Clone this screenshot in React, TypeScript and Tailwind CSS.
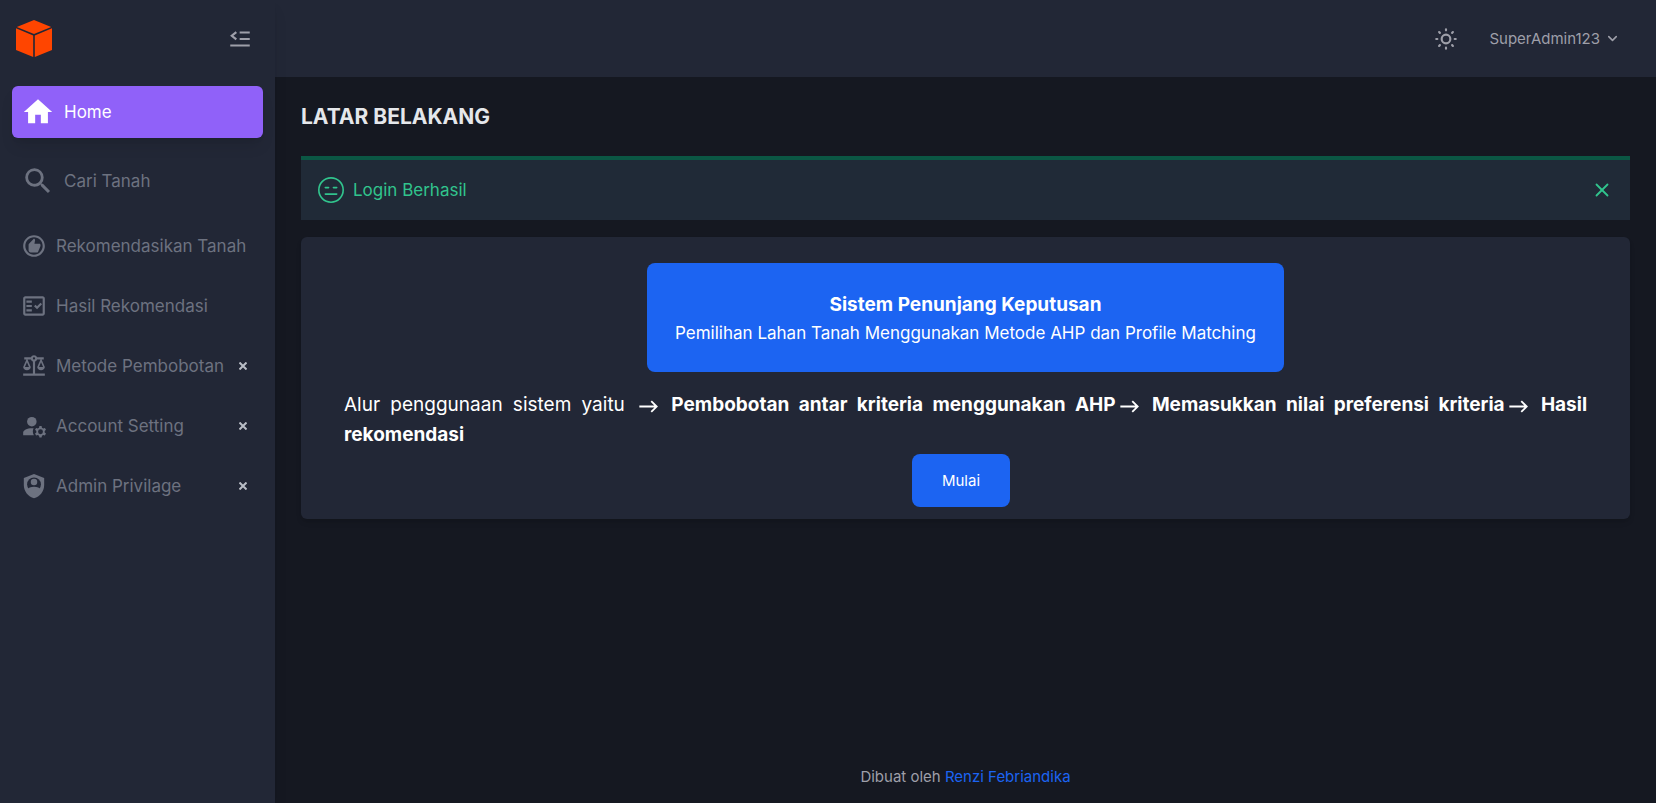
import type { ReactNode } from 'react'
import { MdHome, MdSearch, MdOutlineRecommend, MdOutlineFactCheck, MdOutlineBalance } from 'react-icons/md'
import { HiOutlineSun } from 'react-icons/hi'
import { BsEmojiExpressionless } from 'react-icons/bs'
import { FiChevronDown, FiX } from 'react-icons/fi'

function Logo() {
  return (
    <svg viewBox="0 0 36 37" className="h-[37px] w-9" fill="#ff4500" aria-hidden="true">
      <path d="M18 0 35.2 6.9 18 14 0.8 6.9Z" />
      <path d="M0 8.3 17.2 15.4V37L0 30Z" />
      <path d="M36 8.3 18.8 15.4V37L36 30Z" />
    </svg>
  )
}

function MenuFold() {
  return (
    <svg viewBox="0 0 24 24" className="size-[26px]" fill="none" stroke="currentColor" strokeWidth="2" aria-hidden="true">
      <path d="M11.7 6H21M11.7 12H21M3 18H21M8.6 5.6 4.4 9 8.6 12.4" />
    </svg>
  )
}

function AccountCog() {
  return (
    <svg viewBox="0 0 24 24" className="size-[26px] shrink-0" fill="currentColor" aria-hidden="true">
      <circle cx="10" cy="8" r="4.4" />
      <path d="M10 14c-4.42 0-8 1.79-8 4v2.6h9.9A7 7 0 0 1 11.64 14.09C11.11 14.03 10.56 14 10 14Z" />
      <path
        fillRule="evenodd"
        d="M17 12h2l.35 1.6 1.15.66 1.55-.5 1 1.74-1.2 1.1v1.3l1.2 1.1-1 1.74-1.55-.5-1.15.66L19 22.5h-2l-.35-1.6-1.15-.66-1.55.5-1-1.74 1.2-1.1v-1.3l-1.2-1.1 1-1.74 1.55.5 1.15-.66ZM18 15a2.25 2.25 0 1 0 0 4.5a2.25 2.25 0 0 0 0-4.5Z"
      />
    </svg>
  )
}

function ShieldAccount() {
  return (
    <svg viewBox="0 0 24 24" className="size-[26px] shrink-0" aria-hidden="true">
      <path fill="currentColor" d="M12 1 2.6 4.5V11c0 5.8 4 10.8 9.4 12.2 5.4-1.4 9.4-6.4 9.4-12.2V4.5Z" />
      <circle cx="12" cy="10.6" r="6.4" fill="#222736" />
      <circle cx="12" cy="8.4" r="3" fill="currentColor" />
      <path fill="currentColor" d="M12 12.6c-3 0-5.6 1.2-6.2 2.8C7 17.800 9.300 19.200 12 19.200s5-1.400 6.200-3.800c-.6-1.600-3.200-2.800-6.200-2.800Z" />
    </svg>
  )
}

function Arrow() {
  return (
    <svg viewBox="0 0 24 24" className="inline size-[26px]" fill="none" stroke="currentColor" strokeWidth="1.7" aria-hidden="true">
      <path d="M4 12.5h15.5M15 7.5l5 5-5 5" />
    </svg>
  )
}

function NavItem({ icon, label, large, active, expandable }: { icon: ReactNode; label: string; large?: boolean; active?: boolean; expandable?: boolean }) {
  return (
    <li>
      <a
        href="#"
        aria-current={active ? 'page' : undefined}
        className={`flex items-center gap-[9px] rounded-md px-[9px] ${large ? 'h-[52px]' : 'h-11'} ${
          active ? 'bg-[#9061f9] text-white shadow-lg' : 'text-[#6d7280]'
        }`}
      >
        {icon}
        <span className="grow whitespace-nowrap text-[17px] leading-6">{label}</span>
        {expandable && (
          <svg viewBox="0 0 8 8" className="mr-[7px] size-2 shrink-0" stroke="#b9bdc6" strokeWidth="2" aria-hidden="true">
            <path d="M0.5 0.5l7 7M7.5 0.5l-7 7" />
          </svg>
        )}
      </a>
    </li>
  )
}

function Sidebar() {
  return (
    <aside className="z-10 w-[275px] shrink-0 bg-[#222736] shadow-lg">
      <div className="flex h-[77px] items-center justify-between pl-4 pr-[22px]">
        <a href="#" aria-label="Beranda">
          <Logo />
        </a>
        <button type="button" aria-label="Tutup menu" className="text-[#9e9fa9]">
          <MenuFold />
        </button>
      </div>
      <nav className="px-3 pt-[9px]">
        <ul className="flex flex-col gap-[17px]">
          <NavItem large active icon={<MdHome size={34} className="shrink-0" />} label="Home" />
          <NavItem large icon={<MdSearch size={34} className="shrink-0" />} label="Cari Tanah" />
        </ul>
        <ul className="mt-[17px] flex flex-col gap-4">
          <NavItem icon={<MdOutlineRecommend size={26} className="shrink-0" />} label="Rekomendasikan Tanah" />
          <NavItem icon={<MdOutlineFactCheck size={26} className="shrink-0" />} label="Hasil Rekomendasi" />
          <NavItem icon={<MdOutlineBalance size={26} className="shrink-0" />} label="Metode Pembobotan" expandable />
          <NavItem icon={<AccountCog />} label="Account Setting" expandable />
          <NavItem icon={<ShieldAccount />} label="Admin Privilage" expandable />
        </ul>
      </nav>
    </aside>
  )
}

export default function App() {
  return (
    <div className="flex min-h-screen bg-[#151821] font-['Inter',sans-serif] text-white">
      <Sidebar />
      <div className="flex min-w-0 grow flex-col">
        <header className="flex h-[77px] items-center justify-end gap-[30px] bg-[#222736] pr-9 text-[#9e9fa9]">
          <button type="button" aria-label="Ganti tema">
            <HiOutlineSun size={26} />
          </button>
          <button type="button" className="flex items-center gap-[5px] text-[15px] leading-6">
            SuperAdmin123
            <FiChevronDown size={15} strokeWidth={2.5} />
          </button>
        </header>

        <main className="flex grow flex-col px-[26px]">
          <h1 className="mt-6 text-[21px] font-bold leading-8 text-[#e5e7eb]">LATAR BELAKANG</h1>

          <div role="alert" className="mt-[23px] flex h-16 items-center border-t-4 border-[#0b5744] bg-[#202a37] px-[17px] text-[#31c48d]">
            <BsEmojiExpressionless size={26} />
            <p className="ml-[9px] grow text-[17px] leading-6">Login Berhasil</p>
            <button type="button" aria-label="Tutup">
              <FiX size={22} />
            </button>
          </div>

          <section className="mt-[17px] rounded-md bg-[#222736] px-[43px] pb-3 pt-[26px] shadow-md">
            <div className="mx-auto flex w-fit flex-col items-center rounded-lg bg-[#1c64f2] px-7 pb-[25px] pt-[27px]">
              <h2 className="text-[19px] font-bold leading-[29px]">Sistem Penunjang Keputusan</h2>
              <p className="text-[17px] leading-7">Pemilihan Lahan Tanah Menggunakan Metode AHP dan Profile Matching</p>
            </div>
            <p className="mt-[18px] text-justify text-[19px] leading-[30px]">
              Alur penggunaan sistem yaitu <Arrow /> <strong className="font-bold">Pembobotan antar kriteria menggunakan AHP</strong>
              <Arrow /> <strong className="font-bold">Memasukkan nilai preferensi kriteria</strong>
              <Arrow /> <strong className="font-bold">Hasil rekomendasi</strong>
            </p>
            <div className="flex justify-center pr-[9px] pt-1">
              <button type="button" className="h-[53px] rounded-lg bg-[#1c64f2] px-[30px] text-[15px] leading-6">
                Mulai
              </button>
            </div>
          </section>
        </main>

        <footer className="pb-[14px] text-center text-[15px] leading-6 text-[#9e9fa9]">
          Dibuat oleh{' '}
          <a href="#" className="text-[#1c64f2]">
            Renzi Febriandika
          </a>
        </footer>
      </div>
    </div>
  )
}
